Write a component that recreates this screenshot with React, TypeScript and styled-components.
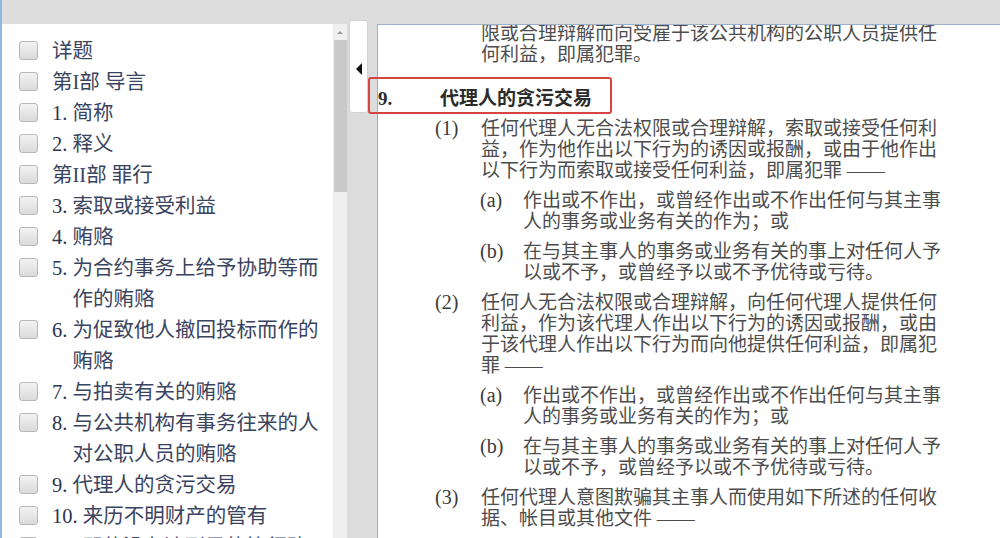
import styled, { createGlobalStyle } from "styled-components";

const GlobalStyle = createGlobalStyle`
    html, body {
        margin: 0;
        padding: 0;
        background: #dcdcdc;
    }
    * {
        box-sizing: border-box;
    }
`;

const Page = styled.div`
    width: 1000px;
    height: 538px;
    overflow: hidden;
    display: flex;
    flex-direction: column;
    background: #dcdcdc;
    border-left: 2px solid #8db8e4;
    font-family: "Liberation Serif", "Noto Sans CJK SC", serif;
`;

const TopBar = styled.div`
    height: 24px;
    flex-shrink: 0;
    background: #dddddd;
`;

const Main = styled.div`
    flex: 1;
    min-height: 0;
    display: flex;
    position: relative;
`;

const Sidebar = styled.div`
    width: 331px;
    flex-shrink: 0;
    background: #fff;
    padding: 12px 12px 0 17px;
    overflow: hidden;
`;

const NavItem = styled.div`
    display: flex;
    align-items: flex-start;
    font-size: 20.5px;
    line-height: 31px;
    color: #3a4461;
`;

const Check = styled.span`
    width: 19px;
    height: 19px;
    flex-shrink: 0;
    margin: 5px 14px 0 0;
    border: 1px solid #b8b8b8;
    border-radius: 3px;
    background: linear-gradient(#f3f3f3, #dadada);
`;

const NavNum = styled.span`
    white-space: pre;
    color: #2c3552;
`;

const NavLabel = styled.span`
    flex: 1;
`;

const ScrollTrack = styled.div`
    width: 14px;
    flex-shrink: 0;
    background: #efefef;
    display: flex;
    flex-direction: column;
    align-items: center;
`;

const ScrollArrow = styled.div`
    height: 16px;
    width: 100%;
    display: flex;
    justify-content: center;
    padding-top: 7px;

    &::before {
        content: "";
        border-left: 3px solid transparent;
        border-right: 3px solid transparent;
        border-bottom: 3px solid #9a9a9a;
        height: 0;
    }
`;

const ScrollThumb = styled.div`
    width: 13px;
    height: 152px;
    background: #c9c9c9;
`;

const Gutter = styled.div`
    width: 30px;
    flex-shrink: 0;
    background: #dcdcdc;
    padding-left: 2px;
`;

const CollapseTab = styled.div`
    width: 19px;
    height: 93px;
    margin-top: -4px;
    background: #fff;
    border: 1px solid #d2d2d2;
    border-radius: 3px;
    display: flex;
    justify-content: center;
    padding-top: 42px;

    &::before {
        content: "";
        height: 0;
        border-top: 6px solid transparent;
        border-bottom: 6px solid transparent;
        border-right: 6px solid #111;
    }
`;

const Content = styled.div`
    flex: 1;
    background: #fff;
    border-left: 1px solid #9cb0cc;
    border-top: 1px solid #9cb0cc;
    overflow: hidden;
    color: #4d4d4d;
    font-size: 19px;
    line-height: 21px;
`;

const Intro = styled.div`
    margin: -2px 0 0 103px;
`;

const Heading = styled.div`
    display: flex;
    margin-top: 23px;
    font-weight: bold;
    color: #2b2b2b;
`;

const HeadingNum = styled.span`
    width: 62px;
    flex-shrink: 0;
`;

const Clause = styled.div<{ $level: number }>`
    display: flex;
    margin-top: 9px;
    margin-left: ${(p) => (p.$level === 1 ? 57 : 102)}px;
`;

const ClauseLabel = styled.span<{ $level: number }>`
    width: ${(p) => (p.$level === 1 ? 46 : 43)}px;
    flex-shrink: 0;
    font-size: 20px;
    color: #3a3a3a;
`;

const Line = styled.div`
    white-space: nowrap;
`;

const Highlight = styled.div`
    position: absolute;
    left: 366px;
    top: 53px;
    width: 244px;
    height: 37px;
    border: 2px solid #d64541;
    border-radius: 3px;
    pointer-events: none;
`;

const navItems = [
    { label: "详题" },
    { label: "第I部 导言" },
    { num: "1. ", label: "简称" },
    { num: "2. ", label: "释义" },
    { label: "第II部 罪行" },
    { num: "3. ", label: "索取或接受利益" },
    { num: "4. ", label: "贿赂" },
    { num: "5. ", label: "为合约事务上给予协助等而作的贿赂" },
    { num: "6. ", label: "为促致他人撤回投标而作的贿赂" },
    { num: "7. ", label: "与拍卖有关的贿赂" },
    { num: "8. ", label: "与公共机构有事务往来的人对公职人员的贿赂" },
    { num: "9. ", label: "代理人的贪污交易" },
    { num: "10. ", label: "来历不明财产的管有" },
    { num: "11. ", label: "即使没有达到目的等行贿者与受贿者仍属有罪" },
];

const subA = ["作出或不作出，或曾经作出或不作出任何与其主事", "人的事务或业务有关的作为；或"];
const subB = ["在与其主事人的事务或业务有关的事上对任何人予", "以或不予，或曾经予以或不予优待或亏待。"];

const clauses = [
    {
        level: 1,
        label: "(1)",
        lines: [
            "任何代理人无合法权限或合理辩解，索取或接受任何利",
            "益，作为他作出以下行为的诱因或报酬，或由于他作出",
            "以下行为而索取或接受任何利益，即属犯罪 ——",
        ],
    },
    { level: 2, label: "(a)", lines: subA },
    { level: 2, label: "(b)", lines: subB },
    {
        level: 1,
        label: "(2)",
        lines: [
            "任何人无合法权限或合理辩解，向任何代理人提供任何",
            "利益，作为该代理人作出以下行为的诱因或报酬，或由",
            "于该代理人作出以下行为而向他提供任何利益，即属犯",
            "罪 ——",
        ],
    },
    { level: 2, label: "(a)", lines: subA },
    { level: 2, label: "(b)", lines: subB },
    {
        level: 1,
        label: "(3)",
        lines: ["任何代理人意图欺骗其主事人而使用如下所述的任何收", "据、帐目或其他文件 ——"],
    },
];

const App = () => {
    return (
        <>
            <GlobalStyle />
            <Page>
                <TopBar />
                <Main>
                    <Sidebar>
                        {navItems.map((item, i) => (
                            <NavItem key={i}>
                                <Check />
                                {item.num && <NavNum>{item.num}</NavNum>}
                                <NavLabel>{item.label}</NavLabel>
                            </NavItem>
                        ))}
                    </Sidebar>
                    <ScrollTrack>
                        <ScrollArrow />
                        <ScrollThumb />
                    </ScrollTrack>
                    <Gutter>
                        <CollapseTab />
                    </Gutter>
                    <Content>
                        <Intro>
                            <Line>限或合理辩解而向受雇于该公共机构的公职人员提供任</Line>
                            <Line>何利益，即属犯罪。</Line>
                        </Intro>
                        <Heading>
                            <HeadingNum>9.</HeadingNum>
                            <span>代理人的贪污交易</span>
                        </Heading>
                        {clauses.map((c, i) => (
                            <Clause key={i} $level={c.level}>
                                <ClauseLabel $level={c.level}>{c.label}</ClauseLabel>
                                <div>
                                    {c.lines.map((l, j) => (
                                        <Line key={j}>{l}</Line>
                                    ))}
                                </div>
                            </Clause>
                        ))}
                    </Content>
                    <Highlight />
                </Main>
            </Page>
        </>
    );
};

export default App;
